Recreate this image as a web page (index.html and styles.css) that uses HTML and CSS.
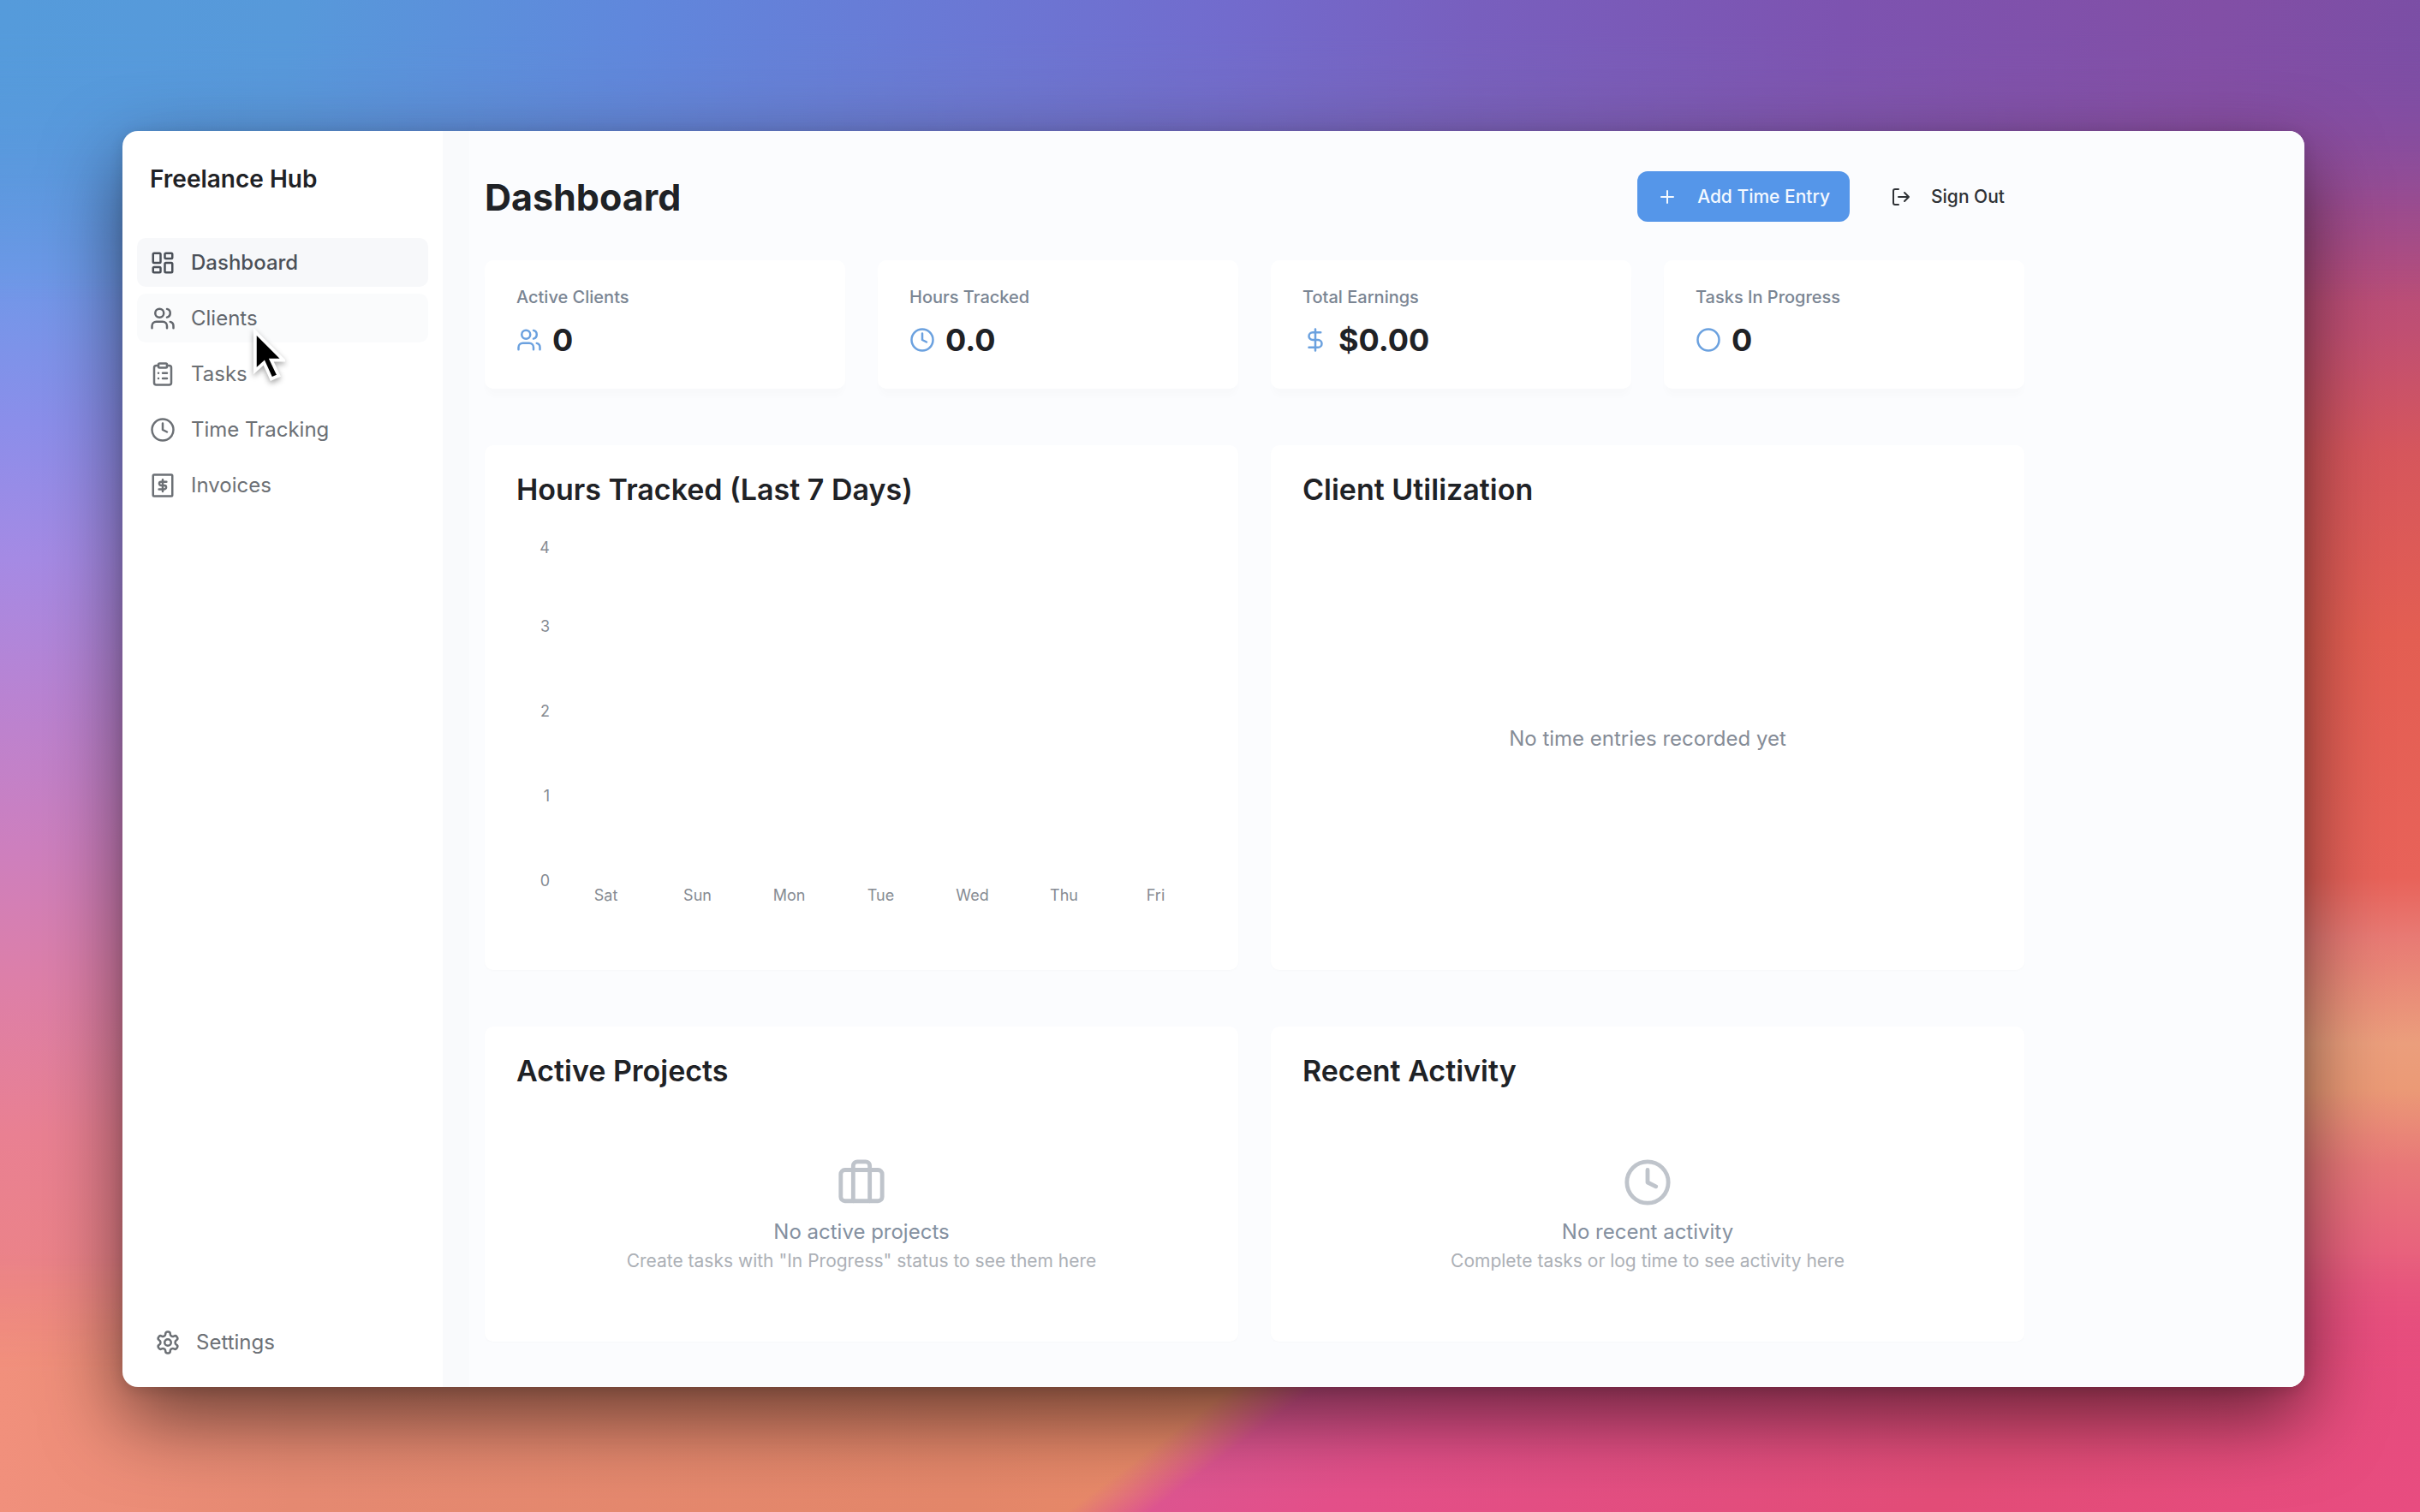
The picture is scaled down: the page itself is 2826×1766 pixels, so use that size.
FILE: index.html
```html
<!DOCTYPE html>
<html lang="en">
<head>
<meta charset="utf-8">
<title>Freelance Hub</title>
<meta name="viewport" content="width=device-width, initial-scale=1">
<link rel="stylesheet" href="styles.css">
</head>
<body>
<svg class="sprite" aria-hidden="true">
  <symbol id="i-grid" viewBox="0 0 24 24"><rect x="3" y="3" width="7" height="9" rx="1"/><rect x="14" y="3" width="7" height="5" rx="1"/><rect x="14" y="12" width="7" height="9" rx="1"/><rect x="3" y="16" width="7" height="5" rx="1"/></symbol>
  <symbol id="i-users" viewBox="0 0 24 24"><path d="M16 21v-2a4 4 0 0 0-4-4H6a4 4 0 0 0-4 4v2"/><circle cx="9" cy="7" r="4"/><path d="M22 21v-2a4 4 0 0 0-3-3.87M16 3.13a4 4 0 0 1 0 7.75"/></symbol>
  <symbol id="i-clipboard" viewBox="0 0 24 24"><rect x="8" y="2" width="8" height="4" rx="1"/><path d="M16 4h2a2 2 0 0 1 2 2v14a2 2 0 0 1-2 2H6a2 2 0 0 1-2-2V6a2 2 0 0 1 2-2h2M12 11h4M12 16h4M8 11h.01M8 16h.01"/></symbol>
  <symbol id="i-clock" viewBox="0 0 24 24"><circle cx="12" cy="12" r="10"/><path d="M12 6v6l4 2"/></symbol>
  <symbol id="i-invoice" viewBox="0 0 24 24"><rect x="3" y="2" width="18" height="20" rx="1"/><path d="M15.500 8.500H10.500a1.750 1.750 0 0 0 0 3.500h3a1.750 1.750 0 0 1 0 3.500H8.500M12 6.500v11"/></symbol>
  <symbol id="i-gear" viewBox="0 0 24 24"><path d="M12.22 2h-.44a2 2 0 0 0-2 2v.18a2 2 0 0 1-1 1.730l-.43.250a2 2 0 0 1-2 0l-.15-.08a2 2 0 0 0-2.730.730l-.22.380a2 2 0 0 0 .730 2.730l.150.100a2 2 0 0 1 1 1.720v.510a2 2 0 0 1-1 1.740l-.15.090a2 2 0 0 0-.730 2.730l.220.380a2 2 0 0 0 2.730.730l.150-.080a2 2 0 0 1 2 0l.430.250a2 2 0 0 1 1 1.730V20a2 2 0 0 0 2 2h.440a2 2 0 0 0 2-2v-.180a2 2 0 0 1 1-1.730l.430-.250a2 2 0 0 1 2 0l.150.080a2 2 0 0 0 2.730-.730l.220-.390a2 2 0 0 0-.730-2.730l-.150-.080a2 2 0 0 1-1-1.740v-.500a2 2 0 0 1 1-1.740l.150-.090a2 2 0 0 0 .730-2.730l-.220-.380a2 2 0 0 0-2.730-.730l-.150.080a2 2 0 0 1-2 0l-.430-.250a2 2 0 0 1-1-1.730V4a2 2 0 0 0-2-2z"/><circle cx="12" cy="12" r="3"/></symbol>
  <symbol id="i-plus" viewBox="0 0 24 24"><path d="M5 12h14M12 5v14"/></symbol>
  <symbol id="i-logout" viewBox="0 0 24 24"><path d="M9 21H5a2 2 0 0 1-2-2V5a2 2 0 0 1 2-2h4M16 17l5-5-5-5M21 12H9"/></symbol>
  <symbol id="i-dollar" viewBox="0 0 24 24"><path d="M12 2v20M17 5H9.500a3.500 3.500 0 0 0 0 7h5a3.500 3.500 0 0 1 0 7H6"/></symbol>
  <symbol id="i-circle" viewBox="0 0 24 24"><circle cx="12" cy="12" r="10"/></symbol>
  <symbol id="i-case" viewBox="0 0 24 24"><rect x="2" y="6" width="20" height="15" rx="2"/><path d="M16 21V4a2 2 0 0 0-2-2h-4a2 2 0 0 0-2 2v17"/></symbol>
</svg>

<div class="desktop">
  <div class="window">
    <aside class="sidebar">
      <p class="brand">Freelance Hub</p>
      <nav class="nav" aria-label="Main">
        <a class="nav-item active" href="#dashboard"><svg class="icon"><use href="#i-grid"/></svg>Dashboard</a>
        <a class="nav-item hovered" href="#clients"><svg class="icon"><use href="#i-users"/></svg>Clients</a>
        <a class="nav-item" href="#tasks"><svg class="icon"><use href="#i-clipboard"/></svg>Tasks</a>
        <a class="nav-item" href="#time"><svg class="icon"><use href="#i-clock"/></svg>Time Tracking</a>
        <a class="nav-item" href="#invoices"><svg class="icon"><use href="#i-invoice"/></svg>Invoices</a>
      </nav>
      <a class="nav-item settings" href="#settings"><svg class="icon"><use href="#i-gear"/></svg>Settings</a>
    </aside>

    <main class="main">
      <div class="content">
        <header class="header">
          <h1 class="page-title">Dashboard</h1>
          <div class="actions">
            <button class="btn btn-primary" type="button"><svg class="icon"><use href="#i-plus"/></svg>Add Time Entry</button>
            <button class="btn" type="button"><svg class="icon"><use href="#i-logout"/></svg>Sign Out</button>
          </div>
        </header>

        <section class="stats" aria-label="Summary">
          <div class="card stat"><h2 class="stat-label">Active Clients</h2><p class="stat-value"><svg class="icon"><use href="#i-users"/></svg>0</p></div>
          <div class="card stat"><h2 class="stat-label">Hours Tracked</h2><p class="stat-value"><svg class="icon"><use href="#i-clock"/></svg>0.0</p></div>
          <div class="card stat"><h2 class="stat-label">Total Earnings</h2><p class="stat-value"><svg class="icon"><use href="#i-dollar"/></svg>$0.00</p></div>
          <div class="card stat"><h2 class="stat-label">Tasks In Progress</h2><p class="stat-value"><svg class="icon"><use href="#i-circle"/></svg>0</p></div>
        </section>

        <div class="panels">
          <section class="card panel">
            <h2 class="panel-title">Hours Tracked (Last 7 Days)</h2>
            <div class="chart">
              <ol class="axis-y"><li>4</li><li>3</li><li>2</li><li>1</li><li>0</li></ol>
              <ol class="axis-x"><li>Sat</li><li>Sun</li><li>Mon</li><li>Tue</li><li>Wed</li><li>Thu</li><li>Fri</li></ol>
            </div>
          </section>
          <section class="card panel">
            <h2 class="panel-title">Client Utilization</h2>
            <p class="chart-empty">No time entries recorded yet</p>
          </section>
          <section class="card panel">
            <h2 class="panel-title">Active Projects</h2>
            <div class="empty">
              <svg class="icon"><use href="#i-case"/></svg>
              <p class="empty-title">No active projects</p>
              <p class="empty-hint">Create tasks with "In Progress" status to see them here</p>
            </div>
          </section>
          <section class="card panel">
            <h2 class="panel-title">Recent Activity</h2>
            <div class="empty">
              <svg class="icon"><use href="#i-clock"/></svg>
              <p class="empty-title">No recent activity</p>
              <p class="empty-hint">Complete tasks or log time to see activity here</p>
            </div>
          </section>
        </div>
      </div>
    </main>
  </div>
</div>

<svg class="cursor" viewBox="0 0 40 64" aria-hidden="true"><path d="M3 3V51L14 41L23 61L32 57L23 38H38Z"/></svg>
</body>
</html>
```
FILE: styles.css
```css
* { box-sizing: border-box; margin: 0; padding: 0; }

html { min-height: 100%; }

body {
  position: relative;
  min-height: 100vh;
  font-family: Inter, "Liberation Sans", sans-serif;
  color: #1f2226;
  background: linear-gradient(180deg, #559bdb 0%, #6097e0 10%, #6f98e8 18%, #8b8eea 28%, #a58ae4 37%, #b983d2 46%, #cd7fbe 56%, #dd7fa8 65%, #e98092 75%, #ec8484 88%, #f1907c 100%);
}

/* Wallpaper: right half, top band and bottom band fade into the base gradient */
body::before,
body::after,
.desktop::before {
  content: "";
  position: absolute;
  z-index: -1;
  right: 0;
}

body::before {
  top: 0;
  bottom: 0;
  left: 0;
  background: linear-gradient(180deg, #7a4ea5 0%, #924c9c 7%, #ad4b82 14%, #c04f72 22%, #d6565c 30%, #e35e52 42%, #e86259 58%, #e87a74 62%, #eb9e7c 69%, #eb9a76 72%, #e87878 77%, #e8617d 83%, #e85080 88%, #e84c80 100%);
  -webkit-mask-image: linear-gradient(90deg, transparent 5%, #000 95%);
  mask-image: linear-gradient(90deg, transparent 5%, #000 95%);
}

body::after {
  top: 0;
  left: 0;
  height: 20vh;
  background: linear-gradient(98deg, #559bdb 0%, #5799da 12%, #6087dc 26%, #6b77d4 40%, #726bcd 50%, #785fbe 60%, #7d53b0 75%, #824fa6 90%, #7a4ea5 100%);
  -webkit-mask-image: linear-gradient(180deg, #000 10%, transparent 100%);
  mask-image: linear-gradient(180deg, #000 10%, transparent 100%);
}

.desktop::before {
  bottom: 0;
  left: 0;
  height: 17vh;
  background:
    linear-gradient(143deg, transparent 51%, #de5590 54%, #e4508a 60%, #e34d78 82%, #e84c80 100%),
    linear-gradient(90deg, #f1907c 0%, #e68a72 12%, #e4876a 40%, #ea8a68 50%);
  -webkit-mask-image: linear-gradient(0deg, #000 55%, transparent 100%);
  mask-image: linear-gradient(0deg, #000 55%, transparent 100%);
}

.sprite { position: absolute; width: 0; height: 0; }

.icon {
  flex: none;
  fill: none;
  stroke: currentColor;
  stroke-width: 2;
  stroke-linecap: round;
  stroke-linejoin: round;
}

.desktop {
  display: flex;
  min-height: 100vh;
  padding: 153px 135px 146px 143px;
}

.window {
  flex: 1;
  display: grid;
  grid-template-columns: 374px 1fr;
  overflow: hidden;
  border-radius: 18px;
  background: #fff;
  box-shadow: 0 36px 90px rgba(0, 0, 0, 0.55), 0 4px 16px rgba(0, 0, 0, 0.12);
}

.sidebar {
  display: flex;
  flex-direction: column;
  padding: 38px 17px 24px;
}

.brand {
  padding-left: 15px;
  font-size: 28px;
  font-weight: 600;
  line-height: 36px;
}

.nav {
  display: flex;
  flex-direction: column;
  gap: 8px;
  margin-top: 51px;
}

.nav-item {
  display: flex;
  align-items: center;
  gap: 18px;
  height: 57px;
  padding-left: 15px;
  border-radius: 10px;
  color: #6c7075;
  font-size: 24px;
  font-weight: 400;
  text-decoration: none;
}

.nav-item .icon { width: 30px; height: 30px; }
.nav-item.active { background: #f7f8fa; color: #4b5058; font-weight: 500; }
.nav-item.hovered { background: #fafbfc; color: #63676d; }

.settings { margin-top: auto; padding-left: 21px; }

.main {
  padding: 47px 18px 53px;
  border-left: 31px solid #f9fafc;
  background: #fbfcfe;
}

.content { max-width: 1798px; }

.header {
  display: flex;
  align-items: center;
  justify-content: space-between;
  height: 59px;
}

.page-title { font-size: 43px; font-weight: 700; line-height: 52px; }

.actions { display: flex; gap: 25px; }

.btn {
  display: flex;
  align-items: center;
  gap: 23px;
  height: 59px;
  padding: 0 23px;
  border: 0;
  border-radius: 12px;
  background: transparent;
  color: #2f3236;
  font: 500 21px Inter, "Liberation Sans", sans-serif;
}

.btn .icon { width: 24px; height: 24px; }
.btn-primary { background: #5596e9; color: #f4f9ff; }

.card {
  border-radius: 10px;
  background: #fff;
  box-shadow: 0 1px 3px rgba(30, 40, 60, 0.02);
}

.stats {
  display: grid;
  grid-template-columns: repeat(4, 1fr);
  gap: 38px;
  margin-top: 45px;
}

.stat { padding: 30px 37px 32px; box-shadow: 0 10px 8px -2px rgba(30, 40, 60, 0.015); }
.stat-label { color: #7a8593; font-size: 20px; font-weight: 500; line-height: 26px; }

.stat-value {
  display: flex;
  align-items: center;
  gap: 12px;
  margin-top: 12px;
  font-size: 36px;
  font-weight: 700;
  line-height: 50px;
}

.stat-value .icon { width: 30px; height: 30px; color: #6ba1df; }

.panels {
  display: grid;
  grid-template-columns: repeat(2, 1fr);
  gap: 66px 38px;
  margin-top: 66px;
}

.panel { padding: 30px 37px 37px; }
.panel-title { margin-bottom: 35px; font-size: 34px; font-weight: 600; line-height: 44px; }

.chart {
  display: grid;
  grid-template-columns: 39px 1fr;
  align-items: start;
  height: 467px;
  padding-right: 6px;
  color: #868b92;
  font-size: 18px;
  line-height: 22px;
}

.chart ol { list-style: none; }
.axis-y { text-align: right; }
.axis-y li { height: 99px; }
.axis-y li:first-child { height: 92px; }

.axis-x {
  display: grid;
  grid-template-columns: repeat(7, 1fr);
  padding: 406px 0 0 12px;
  text-align: center;
}

.chart-empty {
  display: grid;
  place-items: center;
  height: 467px;
  color: #858c97;
  font-size: 24px;
}

.empty {
  display: flex;
  flex-direction: column;
  align-items: center;
  padding: 44px 0 40px;
  line-height: 34px;
  text-align: center;
}

.empty .icon { width: 58px; height: 58px; margin-bottom: 12px; color: #bfc4cb; }
.empty-title { color: #8490a0; font-size: 24px; }
.empty-hint { color: #acb0b6; font-size: 21px; }

.cursor {
  position: absolute;
  top: 384px;
  left: 295px;
  width: 38px;
  height: 62px;
  fill: #000;
  stroke: #fff;
  stroke-width: 4;
  filter: drop-shadow(0 3px 3px rgba(0, 0, 0, 0.35));
}
```
